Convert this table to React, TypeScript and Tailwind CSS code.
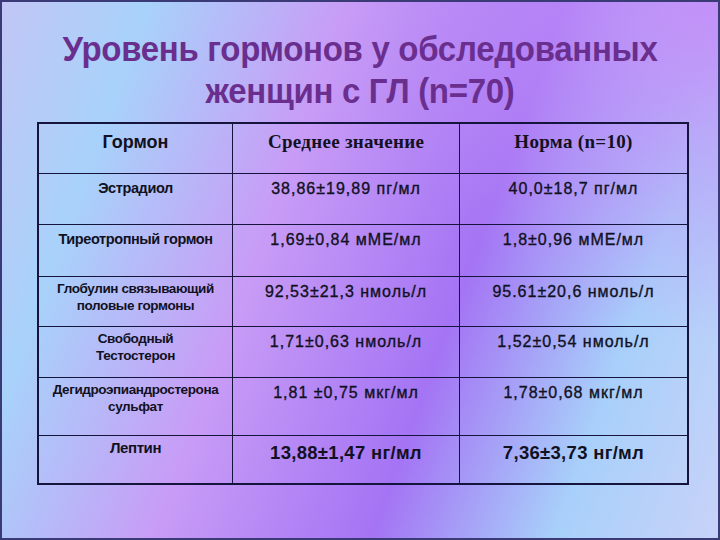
import React from "react";

type Row = {
  name: string[];
  nameSize: string;
  namePt: string;
  mean: string;
  norm: string;
  h: string;
  big?: boolean;
};

const rows: Row[] = [
  { name: ["Эстрадиол"], nameSize: "text-[14.5px]", namePt: "pt-[6px]", mean: "38,86±19,89 пг/мл", norm: "40,0±18,7 пг/мл", h: "h-[51px]" },
  { name: ["Тиреотропный гормон"], nameSize: "text-[14.5px]", namePt: "pt-[6px]", mean: "1,69±0,84 мМЕ/мл", norm: "1,8±0,96 мМЕ/мл", h: "h-[52px]" },
  { name: ["Глобулин связывающий", "половые гормоны"], nameSize: "text-[13.5px]", namePt: "pt-[3px]", mean: "92,53±21,3 нмоль/л", norm: "95.61±20,6 нмоль/л", h: "h-[50px]" },
  { name: ["Свободный", "Тестостерон"], nameSize: "text-[13.5px]", namePt: "pt-[3px]", mean: "1,71±0,63 нмоль/л", norm: "1,52±0,54 нмоль/л", h: "h-[51px]" },
  { name: ["Дегидроэпиандростерона", "сульфат"], nameSize: "text-[13.5px]", namePt: "pt-[3px]", mean: "1,81 ±0,75 мкг/мл", norm: "1,78±0,68 мкг/мл", h: "h-[58px]" },
  { name: ["Лептин"], nameSize: "text-[15px]", namePt: "pt-[3px]", mean: "13,88±1,47 нг/мл", norm: "7,36±3,73 нг/мл", h: "h-[49px]", big: true },
];

export default function App() {
  return (
    <div className="w-[720px] h-[540px] overflow-hidden border-2 border-[#3a3a76] bg-[radial-gradient(circle_at_100%_0%,#c490f8_0%,rgba(196,144,248,0)_38%),linear-gradient(110deg,#c2c6f6_0%,#a8d2fa_16%,#c89cf6_38%,#a474f4_62%,#a8d0fa_82%,#c8d2f8_100%)] font-['Liberation_Sans',Arial,sans-serif]">
      <div className="flex flex-col items-center pt-[28px]">
        <h1 className="text-[33px] leading-[40px] font-bold text-[#6a2f8e] text-center tracking-[-0.3px] scale-y-105">
          <div>Уровень гормонов у обследованных</div>
          <div>женщин с ГЛ (n=70)</div>
        </h1>
      </div>
      <div className="mt-[12px] ml-[35px] w-[652px] border-t-2 border-l-2 border-[#14143c] text-[#111122]">
        <div className="grid grid-cols-[194px_227px_229px] h-[50px]">
          <div className="border-r border-b border-[#14143c] pt-[7px] text-center text-[18px] leading-[22px] font-bold">
            Гормон
          </div>
          <div className="border-r border-b border-[#14143c] pt-[7px] text-center text-[19px] leading-[22px] font-bold font-['Liberation_Serif','Times_New_Roman',serif] tracking-[0.3px]">
            Среднее значение
          </div>
          <div className="border-r-2 border-b border-[#14143c] pt-[7px] text-center text-[19px] leading-[22px] font-bold font-['Liberation_Serif','Times_New_Roman',serif] tracking-[0.3px]">
            Норма (n=10)
          </div>
        </div>
        {rows.map((r, i) => {
          const last = i === rows.length - 1;
          const bb = last ? "border-b-2" : "border-b";
          const val = r.big
            ? "pt-[6px] text-[18.5px] leading-[22px] font-bold tracking-[0.3px]"
            : "pt-[5px] text-[16px] leading-[20px] tracking-[1px] [-webkit-text-stroke:0.35px_#111122]";
          return (
            <div key={i} className={`grid grid-cols-[194px_227px_229px] ${r.h}`}>
              <div className={`border-r ${bb} border-[#14143c] ${r.namePt} text-center ${r.nameSize} leading-[17px] font-bold tracking-[-0.4px]`}>
                {r.name.map((n, j) => (
                  <div key={j}>{n}</div>
                ))}
              </div>
              <div className={`border-r ${bb} border-[#14143c] text-center ${val}`}>{r.mean}</div>
              <div className={`border-r-2 ${bb} border-[#14143c] text-center ${val}`}>{r.norm}</div>
            </div>
          );
        })}
      </div>
    </div>
  );
}
